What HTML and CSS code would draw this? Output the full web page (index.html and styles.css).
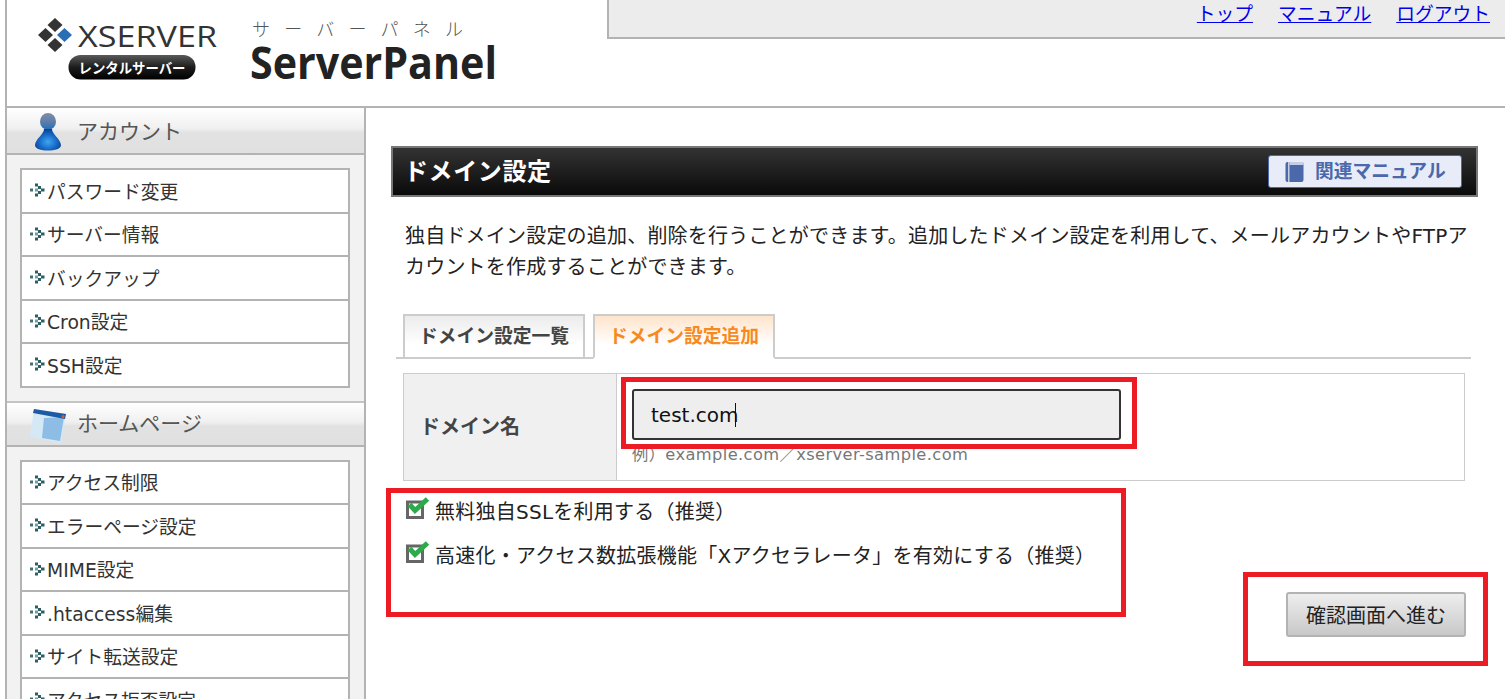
FILE: index.html
```html
<!DOCTYPE html>
<html lang="ja">
<head>
<meta charset="utf-8">
<title>ServerPanel</title>
<link rel="stylesheet" href="styles.css">
</head>
<body>
<svg class="defs" width="0" height="0" aria-hidden="true">
  <defs>
    <symbol id="bullet" viewBox="0 0 16 14">
      <rect x="0" y="5.500" width="3" height="3" fill="#3f7276"/>
      <rect x="5" y="0.500" width="3" height="3" fill="#2a5f63"/>
      <rect x="8" y="3" width="3" height="3" fill="#2a5f63"/>
      <rect x="11" y="5.500" width="3.500" height="3" fill="#2a5f63"/>
      <rect x="8" y="8" width="3" height="3" fill="#2a5f63"/>
      <rect x="5" y="10.500" width="3" height="3" fill="#2a5f63"/>
      <rect x="5" y="5.500" width="3" height="3" fill="#6f9ea1"/>
    </symbol>
    <symbol id="check" viewBox="0 0 24 22">
      <rect x="1.500" y="5" width="15" height="15.500" fill="#fff" stroke="#666" stroke-width="3"/>
      <polyline points="3.500,7.500 9,13.500 21.500,2" fill="none" stroke="#2eaa4a" stroke-width="5"/>
    </symbol>
  </defs>
</svg>
<div class="page">
  <header class="top">
    <svg class="logo" width="600" height="106" viewBox="7 0 600 106" role="img" aria-label="XSERVER ServerPanel">
      <defs>
        <linearGradient id="pill" x1="0" y1="0" x2="0" y2="1"><stop offset="0" stop-color="#5a5a5a"/><stop offset="0.5" stop-color="#1c1c1c"/><stop offset="1" stop-color="#000"/></linearGradient>
      </defs>
      <path d="M55 18 L62.500 25 L55 32 L47.500 25 Z" fill="#333"/>
      <path d="M45.500 28 L53 35 L45.500 42 L38 35 Z" fill="#333"/>
      <path d="M55 38 L62.500 45 L55 52 L47.500 45 Z" fill="#333"/>
      <path d="M64.500 28 L72 35 L64.500 42 L57 35 Z" fill="#2a6fb5"/>
      <text x="78" y="47" class="lg-x" textLength="139" lengthAdjust="spacingAndGlyphs">XSERVER</text>
      <rect x="68.500" y="55" width="127" height="24.500" rx="12" fill="url(#pill)"/>
      <text x="132" y="72.500" class="lg-r" text-anchor="middle" textLength="107" lengthAdjust="spacingAndGlyphs">レンタルサーバー</text>
      <text x="252" y="36" class="lg-k" textLength="211">サーバーパネル</text>
      <text x="250" y="79" class="lg-s" textLength="247" lengthAdjust="spacingAndGlyphs">ServerPanel</text>
    </svg>
    <nav class="topnav">
      <a href="#">トップ</a>
      <a href="#">マニュアル</a>
      <a href="#">ログアウト</a>
    </nav>
  </header>
  <div class="body">
    <aside class="side">
      <section class="group">
        <h2 class="group-h">
          <svg class="gicon" width="36" height="40" viewBox="0 0 36 40" aria-hidden="true">
            <defs>
              <radialGradient id="pbody" cx="0.5" cy="0.6" r="0.6"><stop offset="0" stop-color="#3fa6f2"/><stop offset="0.6" stop-color="#1666c4"/><stop offset="1" stop-color="#0c3f8c"/></radialGradient>
              <linearGradient id="phead" x1="0" y1="0" x2="0" y2="1"><stop offset="0" stop-color="#7d8fa8"/><stop offset="0.5" stop-color="#5f7ea8"/><stop offset="1" stop-color="#1f6fc0"/></linearGradient>
            </defs>
            <ellipse cx="18" cy="10.500" rx="8" ry="8.500" fill="url(#phead)"/>
            <path d="M14 18 C14 23 5.500 28 5 34 C5 38 11 39.500 18 39.500 C25 39.500 31 38 31 34 C30.500 28 22 23 22 18 Z" fill="url(#pbody)"/>
          </svg>
          <span>アカウント</span>
        </h2>
        <ul class="menu">
          <li><svg class="bl"><use href="#bullet"/></svg>パスワード変更</li>
          <li><svg class="bl"><use href="#bullet"/></svg>サーバー情報</li>
          <li><svg class="bl"><use href="#bullet"/></svg>バックアップ</li>
          <li><svg class="bl"><use href="#bullet"/></svg>Cron設定</li>
          <li><svg class="bl"><use href="#bullet"/></svg>SSH設定</li>
        </ul>
      </section>
      <section class="group">
        <h2 class="group-h">
          <svg class="gicon" width="36" height="40" viewBox="0 0 36 40" aria-hidden="true">
            <path d="M4 4 L36 9 L31 38 L0 32 Z" fill="#d5e8f6"/>
            <path d="M14 13 L34 12 L30 36 L12 33 Z" fill="#8dbde4"/>
            <path d="M4 4 L36 9 L35 14 L3 8 Z" fill="#1d5aa5"/>
            <circle cx="33" cy="11.500" r="1.500" fill="#e0592a"/>
          </svg>
          <span>ホームページ</span>
        </h2>
        <ul class="menu">
          <li><svg class="bl"><use href="#bullet"/></svg>アクセス制限</li>
          <li><svg class="bl"><use href="#bullet"/></svg>エラーページ設定</li>
          <li><svg class="bl"><use href="#bullet"/></svg>MIME設定</li>
          <li><svg class="bl"><use href="#bullet"/></svg>.htaccess編集</li>
          <li><svg class="bl"><use href="#bullet"/></svg>サイト転送設定</li>
          <li><svg class="bl"><use href="#bullet"/></svg>アクセス拒否設定</li>
        </ul>
      </section>
    </aside>
    <main class="main">
      <div class="titlebar">
        <h1>ドメイン設定</h1>
        <a class="manual" href="#">
          <svg width="20" height="22" viewBox="0 0 20 22" aria-hidden="true">
            <rect x="0.500" y="1" width="18" height="20" rx="2" fill="#4a68aa"/>
            <rect x="3" y="1" width="1.500" height="20" fill="#c4cfe6"/>
            <rect x="4.500" y="1" width="14" height="3" fill="#c4cfe6"/>
          </svg>
          <span>関連マニュアル</span>
        </a>
      </div>
      <p class="intro">独自ドメイン設定の追加、削除を行うことができます。追加したドメイン設定を利用して、メールアカウントやFTPアカウントを作成することができます。</p>
      <div class="tabs">
        <a class="tab" href="#">ドメイン設定一覧</a>
        <a class="tab is-active" href="#">ドメイン設定追加</a>
      </div>
      <div class="formrow">
        <div class="flabel">ドメイン名</div>
        <div class="ffield">
          <div class="input"><span>test.com</span><i class="caret"></i></div>
          <div class="hint">例）example.com／xserver-sample.com</div>
        </div>
      </div>
      <div class="checks">
        <div class="check"><svg class="cb"><use href="#check"/></svg>無料独自SSLを利用する（推奨）</div>
        <div class="check"><svg class="cb"><use href="#check"/></svg>高速化・アクセス数拡張機能「Xアクセラレータ」を有効にする（推奨）</div>
      </div>
      <div class="actions"><button class="btn" type="button">確認画面へ進む</button></div>
      <div class="mark mark-input"></div>
      <div class="mark mark-checks"></div>
      <div class="mark mark-btn"></div>
    </main>
  </div>
</div>
</body>
</html>
```
FILE: styles.css
```css
* { box-sizing: border-box; }
html, body { margin: 0; padding: 0; height: 100%; overflow: hidden; background: #fff; }
body {
  font-family: "DejaVu Sans", "Noto Sans CJK JP", sans-serif;
  color: #222;
}
.defs { position: absolute; }
.page {
  margin-left: 5px;
  border-left: 2px solid #b3b3b3;
  height: 699px;
  display: flex;
  flex-direction: column;
  overflow: hidden;
}
.top {
  height: 108px;
  flex: none;
  display: flex;
  align-items: flex-start;
  border-bottom: 2px solid #b3b3b3;
}
.logo { display: block; flex: none; }
.lg-x { font: 500 30px "Open Sans", sans-serif; fill: #333; }
.lg-r { font: 700 14px "Noto Sans CJK JP", sans-serif; fill: #fff; }
.lg-k { font: 300 18px "Noto Sans CJK JP", sans-serif; fill: #555; }
.lg-s { font: 700 44px "Open Sans", sans-serif; fill: #222; }
.topnav {
  flex: 1;
  height: 39px;
  background: #ececec;
  border-left: 2px solid #b3b3b3;
  border-bottom: 2px solid #b3b3b3;
  display: flex;
  justify-content: flex-end;
  align-items: center;
  gap: 25px;
  padding: 0 15px 7px 0;
  font-size: 18.75px;
  line-height: 26px;
}
.topnav a { color: #0000ee; }
.body { flex: 1; display: flex; min-height: 0; }
.side {
  width: 359px;
  flex: none;
  background: #f2f2f2;
  border-right: 2px solid #b3b3b3;
}
.group { padding-bottom: 13px; }
.group + .group { border-top: 2px solid #c4c4c4; }
.group-h {
  margin: 0;
  height: 47px;
  display: flex;
  align-items: center;
  gap: 11px;
  padding: 0 0 2px 23px;
  font-size: 21px;
  font-weight: 400;
  color: #555;
  background: linear-gradient(#fff 0, #f0f0f0 45%, #e2e2e2 55%, #e0e0e0 100%);
  border-bottom: 2px solid #b3b3b3;
}
.group + .group .group-h { height: 44px; padding-bottom: 3px; }
.gicon { flex: none; margin-top: 3px; }
.group + .group .gicon { margin-top: 6px; }
.menu {
  list-style: none;
  margin: 13px 14px 0 13px;
  padding: 0;
  background: #fff;
  border: 2px solid #b3b3b3;
}
.menu li {
  height: 43.5px;
  display: flex;
  align-items: center;
  padding: 0 0 1px 8px;
  font-size: 18.75px;
  color: #333;
  border-bottom: 2px solid #b3b3b3;
}
.menu li:last-child { border-bottom: 0; height: 41.5px; }
.bl { width: 16px; height: 14px; flex: none; margin-right: 1px; }
.main { flex: 1; position: relative; padding: 38px 0 0 25px; min-width: 0; }
.titlebar {
  width: 1087px;
  height: 51px;
  border: 2px solid #777;
  background: linear-gradient(#333, #0a0a0a);
  display: flex;
  align-items: center;
  justify-content: space-between;
  padding: 0 14px 0 11px;
}
.titlebar h1 { margin: 0 0 4px; font-size: 24px; letter-spacing: 0.6px; font-weight: 700; color: #fff; }
.manual {
  display: flex;
  align-items: center;
  gap: 10px;
  width: 194px;
  height: 33px;
  padding-left: 16px;
  background: #e8ecf8;
  border: 1px solid #4a68aa;
  border-radius: 3px;
  color: #4a68aa;
  font-size: 18.75px;
  font-weight: 700;
  text-decoration: none;
}
.manual span { margin-bottom: 4px; }
.intro {
  margin: 24px 0 0 14px;
  width: 1072px;
  font-size: 20px;
  line-height: 31px;
  letter-spacing: 0.2px;
  color: #222;
}
.tabs {
  margin: 31px 0 0 5px;
  width: 1075px;
  height: 45px;
  display: flex;
  gap: 8px;
  padding-left: 7px;
  border-bottom: 2px solid #ccc;
}
.tab {
  width: 182px;
  height: 45px;
  padding-bottom: 4px;
  border: 2px solid #ccc;
  display: flex;
  align-items: center;
  justify-content: center;
  font-size: 18.75px;
  font-weight: 700;
  color: #444;
  text-decoration: none;
  background: linear-gradient(#ececec, #fff 70%);
}
.tab.is-active {
  color: #f78a1e;
  border-bottom-color: #fff;
  background: linear-gradient(#ffe4cb, #fff 70%);
}
.formrow {
  margin: 14px 0 0 12px;
  width: 1062px;
  height: 108px;
  display: flex;
  border: 1px solid #ccc;
}
.flabel {
  width: 213px;
  flex: none;
  display: flex;
  align-items: center;
  padding: 0 0 4px 16px;
  background: #f0f0f0;
  border-right: 1px solid #ccc;
  font-size: 20px;
  font-weight: 700;
  color: #444;
}
.ffield { flex: 1; padding: 15px 0 0 15px; }
.input {
  width: 489px;
  height: 51px;
  border: 2px solid #333;
  border-radius: 3px;
  background: #eee;
  padding-left: 17px;
  display: flex;
  align-items: center;
  font-size: 20px;
  color: #111;
}
.caret { display: block; width: 1px; height: 24px; margin-left: -3px; background: #111; }
.hint { font-size: 16.25px; letter-spacing: 0.4px; color: #777; line-height: 22px; margin-top: 4px; }
.checks { margin: 14px 0 0 15px; display: flex; flex-direction: column; gap: 14px; }
.check {
  display: flex;
  align-items: center;
  gap: 5px;
  height: 30px;
  font-size: 20px;
  letter-spacing: 0.25px;
  color: #222;
}
.cb { width: 24px; height: 22px; flex: none; margin-bottom: 4px; }
.actions { width: 1075px; display: flex; justify-content: flex-end; margin-top: 23px; }
.btn {
  width: 180px;
  height: 45px;
  border: 2px solid #b3b3b3;
  border-radius: 3px;
  background: linear-gradient(#eee, #c8c8c8);
  font: 20px "DejaVu Sans", "Noto Sans CJK JP", sans-serif;
  color: #222;
  padding: 0;
}
.mark { position: absolute; border: 5px solid #ed1c24; pointer-events: none; }
.mark-input { left: 255px; top: 269px; width: 516px; height: 72px; }
.mark-checks { left: 20px; top: 380px; width: 740px; height: 129px; }
.mark-btn { left: 877px; top: 464px; width: 245px; height: 94px; }
```
